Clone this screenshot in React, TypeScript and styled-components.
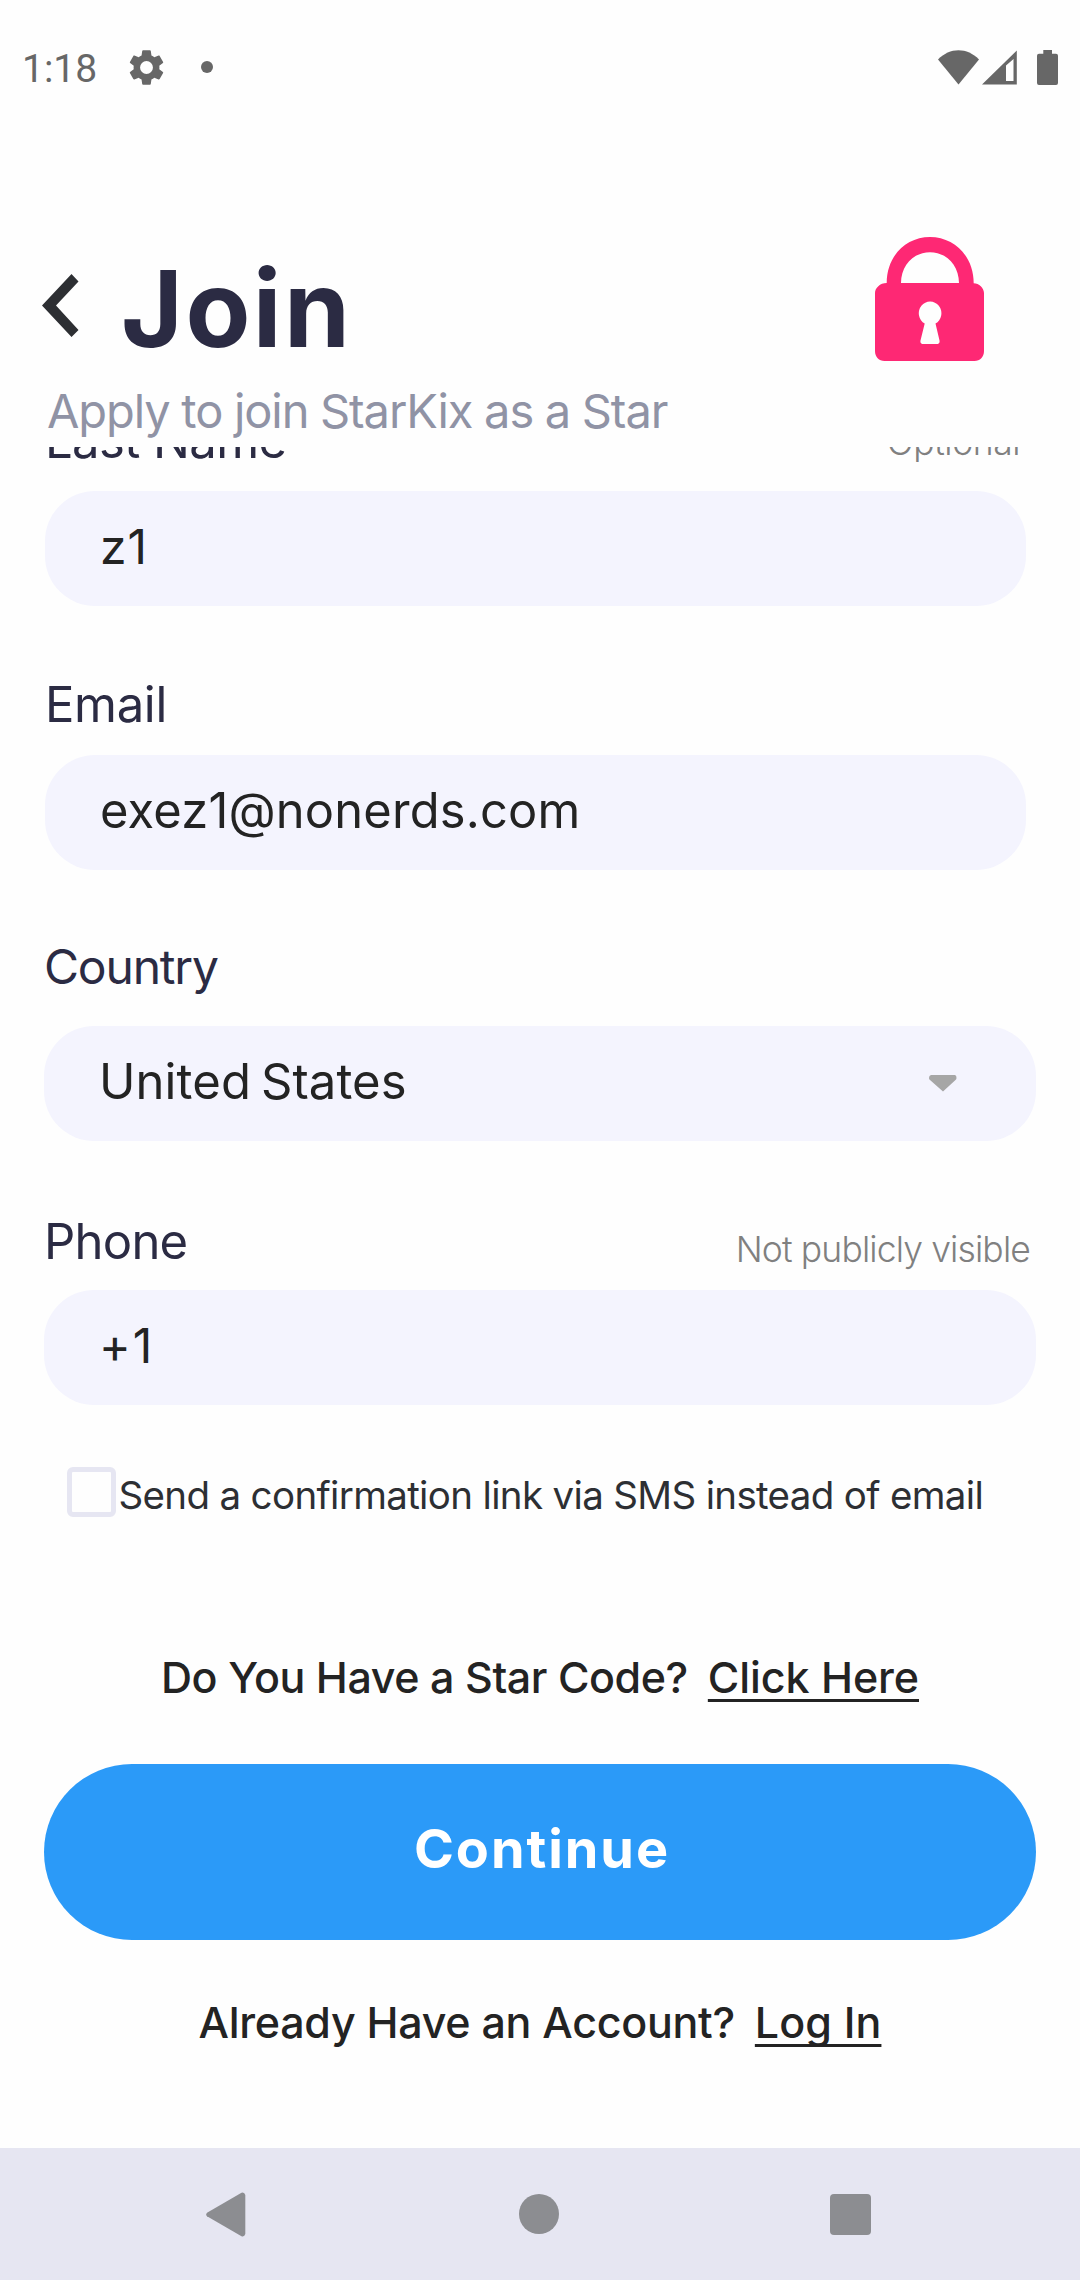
import React from "react";
import styled, { createGlobalStyle } from "styled-components";

const GlobalStyle = createGlobalStyle`
  * { box-sizing: border-box; }
  body {
    margin: 0;
    background: #fefefe;
    font-family: Inter, "Liberation Sans", sans-serif;
  }
  svg { display: block; flex: none; }
`;

const Screen = styled.div`
  display: flex;
  flex-direction: column;
  width: 1080px;
  height: 2280px;
  background: #fefefe;
  overflow: hidden;
`;

const StatusBar = styled.div`
  display: flex;
  align-items: center;
  justify-content: space-between;
  height: 134px;
  padding: 0 22px;
  flex: none;
`;

const StatusGroup = styled.div`
  display: flex;
  align-items: center;
`;

const Clock = styled.span`
  width: 103px;
  padding-top: 4px;
  font: 400 39px/46px Roboto, sans-serif;
  color: #676767;
`;

const NotificationDot = styled.span`
  width: 12px;
  height: 12px;
  margin-left: 33px;
  border-radius: 50%;
  background: #676767;
`;

const SignalIcons = styled.div`
  display: flex;
  align-items: center;
  gap: 3.5px;
  margin-right: 20px;
`;

const Header = styled.header`
  flex: none;
  height: 313px;
  padding: 103px 44px 0 42px;
`;

const TitleRow = styled.div`
  display: flex;
  align-items: flex-start;
  height: 124px;
  padding-right: 52px;
`;

const BackButton = styled.button`
  display: flex;
  width: 37px;
  height: 63px;
  margin: 37px 0 0;
  padding: 0;
  border: 0;
  background: none;
`;

const Title = styled.h1`
  flex: 1;
  margin: 12px 0 0 42px;
  font-size: 106px;
  font-weight: 700;
  line-height: 120px;
  letter-spacing: 2.44px;
  color: #2b2b43;
`;

const Subtitle = styled.p`
  margin: 20px 0 0 5px;
  font-size: 47px;
  line-height: 60px;
  letter-spacing: -1.07px;
  word-spacing: -0.5px;
  color: #9093a5;
  white-space: nowrap;
`;

const ScrollArea = styled.main`
  flex: 1;
  min-height: 0;
  overflow: hidden;
  padding: 0 44px;
`;

const Form = styled.form`
  display: flex;
  flex-direction: column;
  margin-top: -37px;
`;

const Field = styled.div<{ $gap: number; $next: number; $inset?: boolean }>`
  display: flex;
  flex-direction: column;
  gap: ${(p) => p.$gap}px;
  margin: ${(p) => (p.$inset ? `0 10px ${p.$next}px 1px` : `0 0 ${p.$next}px`)};
`;

const LabelRow = styled.div`
  display: flex;
  justify-content: space-between;
  height: 60px;
`;

const Label = styled.label<{ $tracking: number; $size?: number }>`
  padding-top: 1px;
  font-size: ${(p) => p.$size ?? 49}px;
  line-height: 60px;
  letter-spacing: ${(p) => p.$tracking}px;
  color: #2b2b43;
  white-space: nowrap;
`;

const Hint = styled.span<{ $drop: number; $tracking: number }>`
  padding: ${(p) => p.$drop}px 6px 0 0;
  font-size: 35.5px;
  font-weight: 300;
  line-height: 60px;
  letter-spacing: ${(p) => p.$tracking}px;
  color: #808080;
`;

const InputBox = styled.div`
  display: flex;
  align-items: center;
  justify-content: space-between;
  height: 115px;
  padding: 0 79px 0 55px;
  border-radius: 50px;
  background: #f4f4fe;
`;

const Value = styled.span<{ $tracking: number; $size?: number }>`
  padding-bottom: 4px;
  font-size: ${(p) => p.$size ?? 48}px;
  line-height: 60px;
  letter-spacing: ${(p) => p.$tracking}px;
  word-spacing: -4px;
  color: #232323;
`;

const CheckRow = styled.div`
  display: flex;
  height: 50px;
  padding-left: 22.5px;
`;

const Checkbox = styled.span`
  width: 49px;
  height: 50px;
  border: 5.5px solid #e6e6f2;
  border-radius: 6px;
`;

const CheckLabel = styled.span`
  padding: 3px 0 0 3px;
  font-size: 38.5px;
  line-height: 50px;
  letter-spacing: -0.66px;
  color: #2d2f33;
  white-space: nowrap;
`;

const Prompt = styled.div<{ $top: number; $tracking: number }>`
  display: flex;
  justify-content: center;
  gap: 20px;
  margin-top: ${(p) => p.$top}px;
  font-size: 43px;
  font-weight: 500;
  line-height: 60px;
  letter-spacing: ${(p) => p.$tracking}px;
  color: #232323;
  white-space: nowrap;
`;

const Link = styled.a<{ $tracking: number }>`
  letter-spacing: ${(p) => p.$tracking}px;
  text-decoration: underline;
  text-decoration-thickness: 2.6px;
  text-decoration-skip-ink: none;
  text-underline-offset: 5.5px;
`;

const PrimaryButton = styled.button`
  height: 176px;
  margin: 57px 0 0;
  padding: 0 0 7px 4px;
  border: 0;
  border-radius: 88px;
  background: #2b9af8;
  font: 700 54px/60px Inter, sans-serif;
  letter-spacing: 1.95px;
  color: #ffffff;
`;

const NavBar = styled.nav`
  display: grid;
  grid-template-columns: 206px 1fr 40px 1fr 209px;
  align-items: center;
  flex: none;
  height: 132px;
  background: #e6e6f2;
`;

const NavSlot = styled.div<{ $column: number; $end?: boolean }>`
  display: flex;
  grid-row: 1;
  grid-column: ${(p) => p.$column};
  justify-content: ${(p) => (p.$end ? "flex-end" : "flex-start")};
`;

const GearIcon = () => (
  <svg width="43" height="43" viewBox="0 0 24 24" fill="#676767">
    <path d="M19.14 12.94c.04-.3.06-.61.06-.94 0-.32-.02-.64-.07-.94l2.03-1.58c.18-.14.23-.41.12-.61l-1.92-3.32c-.12-.22-.37-.29-.59-.22l-2.39.96c-.5-.38-1.03-.7-1.62-.94l-.36-2.54c-.04-.24-.24-.41-.48-.41h-3.84c-.24 0-.43.17-.47.41l-.36 2.54c-.59.24-1.13.57-1.62.94l-2.39-.96c-.22-.08-.47 0-.59.22L2.74 8.87c-.12.21-.08.47.12.61l2.03 1.58c-.05.3-.09.63-.09.94s.02.64.07.94l-2.03 1.58c-.18.14-.23.41-.12.61l1.92 3.32c.12.22.37.29.59.22l2.39-.96c.5.38 1.03.7 1.62.94l.36 2.54c.05.24.24.41.48.41h3.84c.24 0 .44-.17.47-.41l.36-2.54c.59-.24 1.13-.56 1.62-.94l2.39.96c.22.08.47 0 .59-.22l1.92-3.32c.12-.22.07-.47-.12-.61l-2.01-1.58zM12 15.6a3.6 3.6 0 1 1 0-7.2 3.6 3.6 0 0 1 0 7.2z" />
  </svg>
);

const WifiIcon = () => (
  <svg width="41" height="35" viewBox="0 0 41 35" fill="#676767">
    <path d="M0 9.6C6 3.400 13 .3 20.500 .3S35 3.400 41 9.600L20.500 34.500Z" />
  </svg>
);

const CellIcon = () => (
  <svg width="35" height="35" viewBox="0 0 35 35" fill="#676767" fillRule="evenodd">
    <path d="M0 34.600H34.800V.5ZM24 15.500L31.500 9V31H24Z" />
  </svg>
);

const BatteryIcon = () => (
  <svg width="21" height="35" viewBox="0 0 21 35" fill="#676767">
    <path d="M6.300 0H15V3.700H19A2 2 0 0 1 21 5.700V33A2 2 0 0 1 19 35H2A2 2 0 0 1 0 33V5.700A2 2 0 0 1 2 3.700H6.300Z" />
  </svg>
);

const ChevronIcon = () => (
  <svg width="37" height="63" viewBox="0 0 37 63" fill="#2d2f33">
    <path d="M29.500 0L36.500 7.500L14 31.500L36.500 56L29.500 63L0 31.500Z" />
  </svg>
);

const LockIcon = () => (
  <svg width="109" height="124" viewBox="0 0 109 124" fill="#fe2874" fillRule="evenodd">
    <path d="M11.700 46C11.700 19 31 0 55 0S98.700 19 98.700 46.200C104 46.200 109 51 109 56V114C109 120 105 124 99.500 124H9.500C4 124 0 120 0 114V56C0 51 5 46 11.700 46ZM26 46H84C84 28 71 15.200 55 15.200S26 28 26 46ZM49.700 86.500L45.500 103.500C45 106 46.500 107 48.500 107H61.500C63.500 107 65 106 64.500 103.500L60.500 86.500A11.300 11.700 0 1 0 49.700 86.500Z" />
  </svg>
);

const CaretIcon = () => (
  <svg width="28" height="17" viewBox="0 0 28 17" fill="#a6a6a6">
    <path d="M2 0H26Q27.600 .3 27.500 3Q27.400 4.300 26.500 5L14 16.500L1 5Q0 4.300 0 3Q0 .3 2 0Z" />
  </svg>
);

const NavBackIcon = () => (
  <svg width="40" height="45" viewBox="0 0 40 45" fill="#8c8d91">
    <path d="M1 20.700L35.500 .7Q38.500 -.2 39.300 3V42Q38.500 45.200 35.500 44.300L1 24.300Q-.6 22.500 1 20.700Z" />
  </svg>
);

const NavHomeIcon = () => (
  <svg width="40" height="40" viewBox="0 0 40 40" fill="#8c8d91">
    <circle cx="20" cy="20" r="20" />
  </svg>
);

const NavRecentIcon = () => (
  <svg width="41" height="41" viewBox="0 0 41 41" fill="#8c8d91">
    <rect width="41" height="41" rx="4" />
  </svg>
);

export default function App() {
  return (
    <Screen>
      <GlobalStyle />
      <StatusBar>
        <StatusGroup>
          <Clock>1:18</Clock>
          <GearIcon />
          <NotificationDot />
        </StatusGroup>
        <StatusGroup>
          <SignalIcons>
            <WifiIcon />
            <CellIcon />
          </SignalIcons>
          <BatteryIcon />
        </StatusGroup>
      </StatusBar>

      <Header>
        <TitleRow>
          <BackButton type="button" aria-label="Back">
            <ChevronIcon />
          </BackButton>
          <Title>Join</Title>
          <LockIcon />
        </TitleRow>
        <Subtitle>Apply to join StarKix as a Star</Subtitle>
      </Header>

      <ScrollArea>
        <Form>
          <Field $gap={21} $next={68} $inset>
            <LabelRow>
              <Label $tracking={-0.6}>Last Name</Label>
              <Hint $drop={3} $tracking={-0.47}>Optional</Hint>
            </LabelRow>
            <InputBox>
              <Value $tracking={1}>z1</Value>
            </InputBox>
          </Field>

          <Field $gap={21} $next={66} $inset>
            <LabelRow>
              <Label $tracking={-0.34}>Email</Label>
            </LabelRow>
            <InputBox>
              <Value $tracking={0.2} $size={48.8}>exez1@nonerds.com</Value>
            </InputBox>
          </Field>

          <Field $gap={30} $next={70}>
            <LabelRow>
              <Label $tracking={-1.2} $size={48}>Country</Label>
            </LabelRow>
            <InputBox>
              <Value $tracking={0.1} $size={49}>United States</Value>
              <CaretIcon />
            </InputBox>
          </Field>

          <Field $gap={19} $next={62}>
            <LabelRow>
              <Label $tracking={-0.75}>Phone</Label>
              <Hint $drop={9} $tracking={-0.87}>Not publicly visible</Hint>
            </LabelRow>
            <InputBox>
              <Value $tracking={2}>+1</Value>
            </InputBox>
          </Field>

          <CheckRow>
            <Checkbox />
            <CheckLabel>Send a confirmation link via SMS instead of email</CheckLabel>
          </CheckRow>

          <Prompt $top={130} $tracking={-0.44}>
            <span>Do You Have a Star Code?</span>
            <Link $tracking={-0.07}>Click Here</Link>
          </Prompt>

          <PrimaryButton type="button">Continue</PrimaryButton>

          <Prompt $top={52} $tracking={-0.29}>
            <span>Already Have an Account?</span>
            <Link $tracking={0.1}>Log In</Link>
          </Prompt>
        </Form>
      </ScrollArea>

      <NavBar>
        <NavSlot $column={2}>
          <NavBackIcon />
        </NavSlot>
        <NavSlot $column={3}>
          <NavHomeIcon />
        </NavSlot>
        <NavSlot $column={4} $end>
          <NavRecentIcon />
        </NavSlot>
      </NavBar>
    </Screen>
  );
}
